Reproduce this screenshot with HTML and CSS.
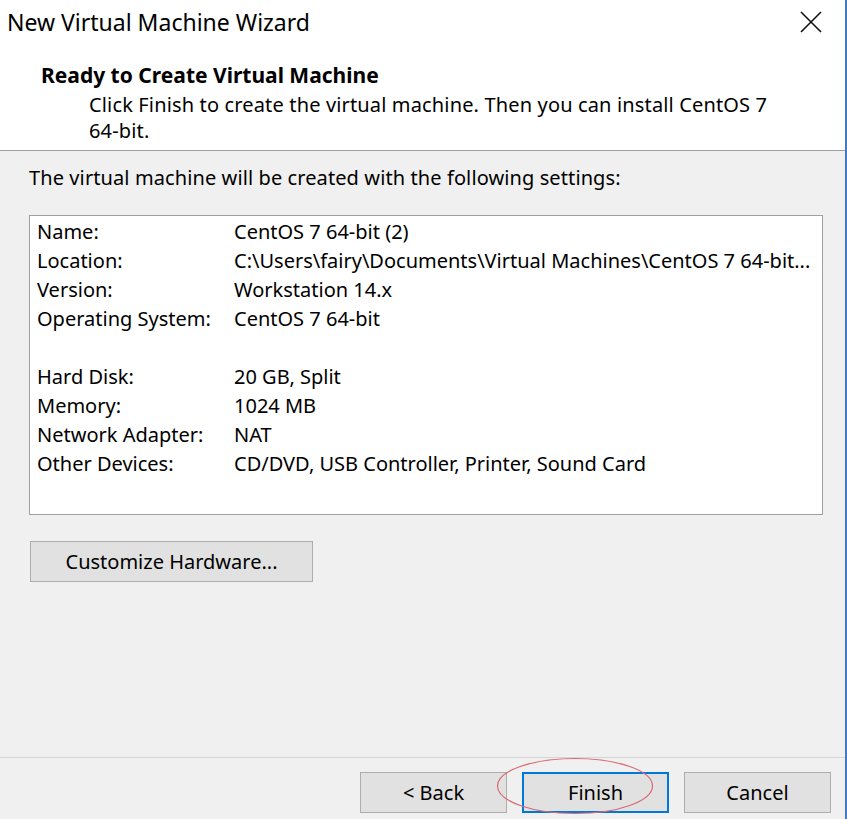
FILE: index.html
```html
<!DOCTYPE html>
<html lang="en">
<head>
    <meta charset="UTF-8">
    <title>New Virtual Machine Wizard</title>
    <link rel="stylesheet" href="styles.css">
</head>
<body>
    <div class="window">
        <div class="titlebar">
            <span class="title">New Virtual Machine Wizard</span>
            <svg class="close" width="22" height="22" viewBox="0 0 22 22">
                <path d="M1 1 L21 21 M21 1 L1 21" stroke="#111" stroke-width="1.6" fill="none"/>
            </svg>
        </div>
        <div class="header">
            <h1>Ready to Create Virtual Machine</h1>
            <p>Click Finish to create the virtual machine. Then you can install CentOS 7 <span class="nowrap">64-bit.</span></p>
        </div>
        <div class="content">
            <p class="intro">The virtual machine will be created with the following settings:</p>
            <div class="summary">
                <div class="row"><span class="label">Name:</span><span>CentOS 7 64-bit (2)</span></div>
                <div class="row"><span class="label">Location:</span><span>C:\Users\fairy\Documents\Virtual Machines\CentOS 7 64-bit...</span></div>
                <div class="row"><span class="label">Version:</span><span>Workstation 14.x</span></div>
                <div class="row"><span class="label">Operating System:</span><span>CentOS 7 64-bit</span></div>
                <div class="row"></div>
                <div class="row"><span class="label">Hard Disk:</span><span>20 GB, Split</span></div>
                <div class="row"><span class="label">Memory:</span><span>1024 MB</span></div>
                <div class="row"><span class="label">Network Adapter:</span><span>NAT</span></div>
                <div class="row"><span class="label">Other Devices:</span><span>CD/DVD, USB Controller, Printer, Sound Card</span></div>
            </div>
            <button class="btn btn-custom">Customize Hardware...</button>
        </div>
        <div class="footer">
            <button class="btn">&lt; Back</button>
            <button class="btn btn-default">Finish</button>
            <button class="btn">Cancel</button>
            <!-- annotation circle around Finish -->
            <svg class="mark" width="158" height="58" viewBox="0 0 158 58">
                <ellipse cx="79" cy="29" rx="77.5" ry="27.5" stroke="#d96a72" stroke-width="1.2" fill="none"/>
            </svg>
        </div>
    </div>
</body>
</html>
```

FILE: styles.css
```css
body {
    margin: 0;
    background-color: #f0f0f0;
    font-family: "Noto Sans", "Liberation Sans", Arial, sans-serif;
    font-size: 20px;
    color: #000;
}
.window {
    width: 845px;
    height: 819px;
    border-right: 2px solid #4279c4;
    display: flex;
    flex-direction: column;
    background-color: #f0f0f0;
}
.titlebar {
    height: 44px;
    background-color: white;
    display: flex;
    align-items: center;
    justify-content: space-between;
    padding: 0 23px 0 7px;
}
.title {
    font-size: 23px;
}
.header {
    background-color: white;
    height: 88px;
    padding-top: 18px;
    border-bottom: 1px solid #a0a0a0;
}
.header h1 {
    margin: 0 0 4px 41px;
    font-size: 21px;
    line-height: 26px;
}
.header p {
    margin: 0 60px 0 89px;
    line-height: 26px;
    letter-spacing: 0.15px;
}
.nowrap {
    white-space: nowrap;
}
.content {
    flex: 1;
    padding: 14px 22px 0 29px;
}
.intro {
    margin: 0 0 24px 0;
    line-height: 26px;
    letter-spacing: 0.1px;
}
.summary {
    background-color: white;
    border: 1px solid #a0a0a0;
    height: 297px;
    padding: 1px 7px 0 7px;
}
.row {
    display: flex;
    height: 29px;
    line-height: 29px;
    white-space: nowrap;
}
.row .label {
    width: 197px;
}
.btn {
    font-family: inherit;
    font-size: 20px;
    background-color: #e1e1e1;
    border: 1px solid #adadad;
    color: #000;
    padding: 0;
    width: 147px;
    height: 41px;
}
.btn-custom {
    width: 283px;
    margin: 26px 0 0 1px;
}
.btn-default {
    border: 2px solid #0078d7;
}
.footer {
    position: relative;
    height: 47px;
    border-top: 1px solid #d6d6d6;
    padding: 14px 14px 0 0;
    display: flex;
    justify-content: flex-end;
    gap: 15px;
}
.mark {
    position: absolute;
    left: 496px;
    top: -1px;
}
```
